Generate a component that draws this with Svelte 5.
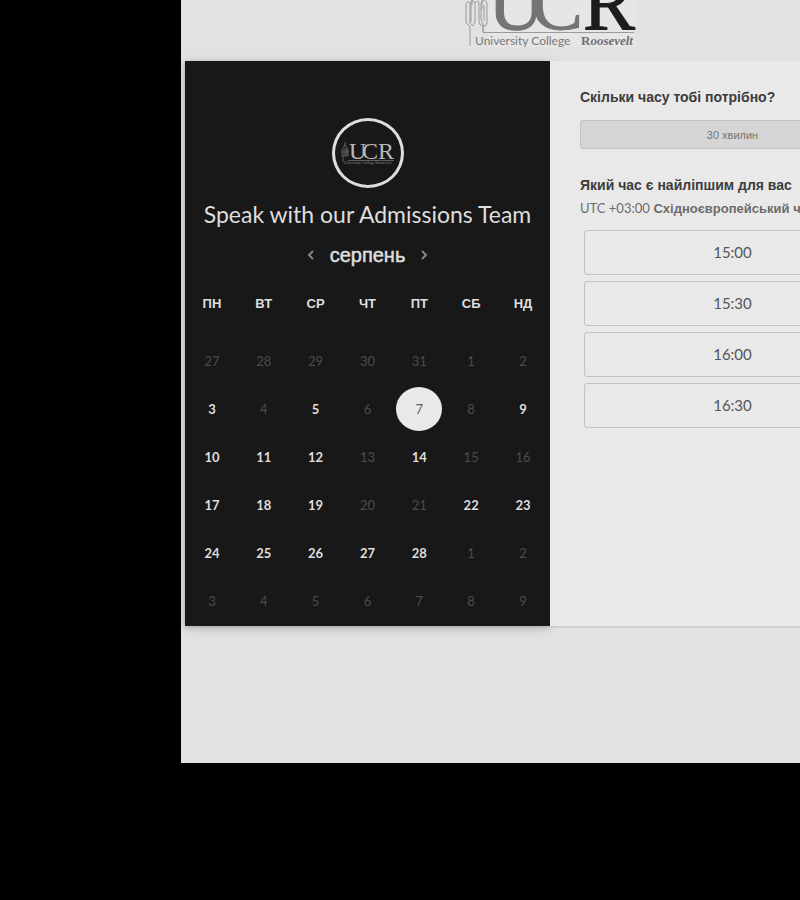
<script>
  const weekdays = ['ПН', 'ВТ', 'СР', 'ЧТ', 'ПТ', 'СБ', 'НД'];
  const numbers = [
    [27, 28, 29, 30, 31, 1, 2],
    [3, 4, 5, 6, 7, 8, 9],
    [10, 11, 12, 13, 14, 15, 16],
    [17, 18, 19, 20, 21, 22, 23],
    [24, 25, 26, 27, 28, 1, 2],
    [3, 4, 5, 6, 7, 8, 9]
  ];
  const open = [[], [0, 2, 4, 6], [0, 1, 2, 4], [0, 1, 2, 5, 6], [0, 1, 2, 3, 4], []];
  const weeks = numbers.map((row, r) =>
    row.map((day, c) => ({ day, key: `${r}-${c}`, free: open[r].includes(c) }))
  );
  const times = ['15:00', '15:30', '16:00', '16:30'];
  let selected = $state('1-4');
</script>

<main class="sheet">
  <header class="brand">
    <svg class="logo" width="172" height="48" viewBox="0 0 172 48" role="img" aria-label="University College Roosevelt">
      <rect x="24" width="148" height="47" fill="#e6e6e6" />
      <g fill="none" stroke="#9a9a9a" stroke-width="1">
        <path d="M6 46V26L2 23V4q2-4 4-1v20l3 3 2-4V3q-2-4-4-2v21M11 3q3-4 4 0v19l2 4M19 32V24q-2-2-2-6V3q2-5 6 0v20q-2 5-5 2M20 5v16M8 0v5M18 0v9" />
        <path d="M19 25v7.500H170" />
      </g>
      <g class="letters" font-size="78" stroke-width="1">
        <text x="24" y="29" fill="#747474" stroke="#747474">U</text>
        <text x="67" y="29" fill="#747474" stroke="#747474">C</text>
        <text x="119" y="29" fill="#1c1c1c" stroke="#1c1c1c">R</text>
      </g>
      <text class="college" x="11" y="45">University College</text>
      <text class="roosevelt" x="117" y="45">R<tspan font-style="italic">oosevelt</tspan></text>
    </svg>
  </header>

  <div class="card">
    <section class="calendar">
      <div class="avatar">
        <svg width="54" height="24" viewBox="0 0 54 24" role="img" aria-label="UCR">
          <path d="M4 1v4M2 7l2-3 2 3v8H1V8M3 7v8M5 7v8M7 8v7M1 11h6M2 15v6" fill="none" stroke="#606060" stroke-width="1" />
          <g class="letters" font-size="24" fill="#b9b9b9">
            <text x="8" y="18">U</text>
            <text x="21" y="18">C</text>
            <text x="37" y="18">R</text>
          </g>
          <path d="M7 19.500H53" stroke="#5c5c5c" />
          <text class="tiny" x="3" y="23">University College Roosevelt</text>
        </svg>
      </div>
      <h1>Speak with our Admissions Team</h1>
      <div class="month">
        <button aria-label="Попередній місяць"><svg width="8" height="12" viewBox="0 0 8 12"><path d="M6 2 2 6l4 4" /></svg></button>
        <h2>серпень</h2>
        <button aria-label="Наступний місяць"><svg width="8" height="12" viewBox="0 0 8 12"><path d="m2 2 4 4-4 4" /></svg></button>
      </div>
      <table>
        <thead>
          <tr>{#each weekdays as name}<th scope="col">{name}</th>{/each}</tr>
        </thead>
        <tbody>
          {#each weeks as week}
            <tr>
              {#each week as cell}
                <td>
                  <button
                    class="day"
                    class:selected={selected === cell.key}
                    disabled={!cell.free}
                    onclick={() => (selected = cell.key)}>{cell.day}</button>
                </td>
              {/each}
            </tr>
          {/each}
        </tbody>
      </table>
    </section>

    <section class="booking">
      <h3>Скільки часу тобі потрібно?</h3>
      <button class="duration">30 хвилин</button>
      <h3>Який час є найліпшим для вас</h3>
      <button class="zone"><span>UTC +03:00</span> Східноєвропейський час</button>
      <ul>
        {#each times as time}
          <li><button class="slot">{time}</button></li>
        {/each}
      </ul>
    </section>
  </div>
</main>

<style>
  :global(body) {
    background: #000;
    overflow-x: hidden;
  }
  .sheet {
    box-sizing: border-box;
    min-width: 736px;
    margin-left: 181px;
    padding: 0 2px 137px 4px;
    overflow: hidden;
    background: #e2e2e2;
    font-family: Lato, "Liberation Sans", sans-serif;
    color: #3c3c3c;
  }
  button {
    margin: 0;
    padding: 0;
    border: 0;
    background: none;
    color: inherit;
    font: inherit;
    cursor: pointer;
  }
  h1, h2, h3, ul {
    margin: 0;
    padding: 0;
    font-weight: normal;
  }
  svg {
    display: block;
  }
  .brand {
    display: flex;
    justify-content: center;
    padding-bottom: 13px;
  }
  .letters {
    font-family: "Liberation Serif", serif;
  }
  .college {
    font-family: Lato, sans-serif;
    font-size: 12px;
    fill: #777;
  }
  .roosevelt {
    font-family: "Liberation Serif", serif;
    font-size: 13px;
    font-weight: bold;
    fill: #707070;
  }
  .tiny {
    font-family: "Liberation Serif", serif;
    font-size: 4px;
    fill: #888;
  }
  .card {
    display: grid;
    grid-template-columns: repeat(2, minmax(0, 1fr));
    box-shadow: 0 1px 2px #c4c4c4;
  }
  .calendar {
    display: flex;
    flex-direction: column;
    align-items: center;
    padding: 57px 1px 1px;
    background: #181818;
    color: #dedede;
    box-shadow: 0 2px 8px #aaa;
    box-sizing: border-box;
  }
  .avatar {
    display: flex;
    align-items: center;
    justify-content: center;
    width: 72px;
    height: 70px;
    box-sizing: border-box;
    border: 3px solid #dedede;
    border-radius: 50%;
  }
  h1 {
    margin-top: 11px;
    font-size: 23px;
    line-height: 30px;
    white-space: nowrap;
  }
  .month {
    display: flex;
    align-items: center;
    gap: 15px;
    height: 30px;
    margin-top: 11px;
  }
  .month path {
    fill: none;
    stroke: #858585;
    stroke-width: 2;
  }
  h2 {
    font-family: "Liberation Sans", sans-serif;
    font-size: 20px;
    line-height: 30px;
    -webkit-text-stroke: 0.5px;
  }
  table {
    width: 100%;
    table-layout: fixed;
    border-collapse: collapse;
    margin-top: 17px;
  }
  th {
    height: 34px;
    padding: 0 0 16px;
    font: bold 13px/34px "Liberation Sans", sans-serif;
  }
  td {
    height: 48px;
    padding: 0;
    text-align: center;
  }
  .day {
    width: 46px;
    height: 44px;
    border-radius: 50%;
    font-size: 13px;
    font-weight: bold;
    vertical-align: middle;
  }
  .day:disabled {
    color: #4c4c4c;
    font-weight: normal;
    cursor: default;
  }
  .day.selected {
    background: #e9e9e9;
    color: #666;
    font-weight: normal;
  }
  .booking {
    position: relative;
    box-sizing: border-box;
    padding: 24px 30px;
    background: #e9e9e9;
  }
  h3 {
    font: bold 14px/24px "Liberation Sans", sans-serif;
    white-space: nowrap;
  }
  .duration {
    width: 100%;
    height: 29px;
    margin: 11px 0 24px;
    border: 1px solid #c2c2c2;
    border-radius: 3px;
    background: #d5d5d5;
    color: #747474;
    font: 11px/14px "Liberation Sans", sans-serif;
  }
  .zone {
    display: block;
    height: 22px;
    color: #6c6c6c;
    font: bold 13px/22px "Liberation Sans", sans-serif;
    white-space: nowrap;
  }
  .zone span {
    font-family: Lato, sans-serif;
    font-weight: normal;
  }
  ul {
    display: grid;
    gap: 6px;
    margin: 11px 4px 0;
    list-style: none;
  }
  li {
    display: flex;
  }
  .slot {
    flex: 1;
    height: 45px;
    padding-bottom: 2px;
    border: 1px solid #c2c2c2;
    border-radius: 3px;
    color: #555;
    font-size: 15px;
  }
</style>
